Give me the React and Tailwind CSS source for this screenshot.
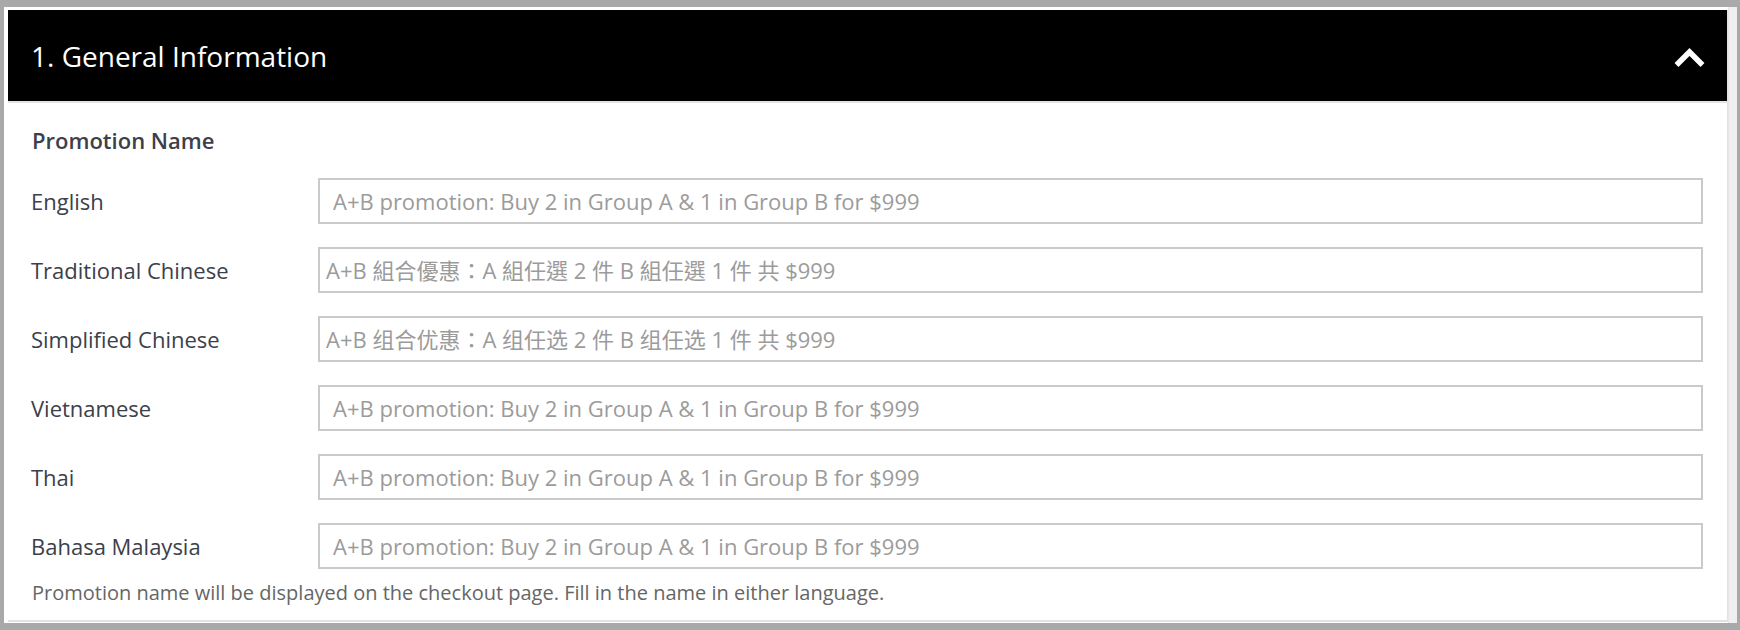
import { useState } from "react"

const font = { fontFamily: '"Open Sans", "Noto Sans CJK TC", sans-serif' }

const rows = [
    { label: "English", placeholder: "A+B promotion: Buy 2 in Group A & 1 in Group B for $999", cjk: false },
    { label: "Traditional Chinese", placeholder: "A+B 組合優惠：A 組任選 2 件 B 組任選 1 件 共 $999", cjk: true },
    { label: "Simplified Chinese", placeholder: "A+B 组合优惠：A 组任选 2 件 B 组任选 1 件 共 $999", cjk: true },
    { label: "Vietnamese", placeholder: "A+B promotion: Buy 2 in Group A & 1 in Group B for $999", cjk: false },
    { label: "Thai", placeholder: "A+B promotion: Buy 2 in Group A & 1 in Group B for $999", cjk: false },
    { label: "Bahasa Malaysia", placeholder: "A+B promotion: Buy 2 in Group A & 1 in Group B for $999", cjk: false },
]

export default function App() {
    const [ open, setOpen ] = useState(true)
    const [ values, setValues ] = useState(rows.map(() => ""))

    return (
        <div className="w-[1740px] h-[630px] bg-[#a9a9a9] pt-[7px] pl-[4px] pr-[3px] pb-[7px] overflow-hidden" style={font}>
            <div className="h-full bg-white flex">
                <div className="flex-1 pl-[4px] pt-[3px] flex flex-col">
                    <div className="flex-1 border-r border-b-2 border-[#e2e2e2] flex flex-col">

                        {/* header */}
                        <button
                            type="button"
                            onClick={() => setOpen(!open)}
                            className="h-[93px] shrink-0 bg-black border-b-2 border-[#e4e4e4] flex items-center justify-between pl-[23px] pr-[22px] text-white text-[28px] cursor-pointer"
                        >
                            <span>1. General Information</span>
                            <svg width="31" height="22" viewBox="0 0 31 22" className={open ? "mt-[5px]" : "mt-[5px] rotate-180"}>
                                <polyline points="2.5,18 15.5,5 28.5,18" fill="none" stroke="white" strokeWidth="5.5" strokeLinejoin="miter" />
                            </svg>
                        </button>

                        {open && (
                            <div className="px-[24px] pt-[22px]">
                                <h3 className="text-[22px] leading-[30px] font-semibold text-[#3c404a]">Promotion Name</h3>

                                <div className="mt-[23px] flex flex-col gap-[23px]">
                                    {rows.map((row, i) => (
                                        <div key={row.label} className="grid grid-cols-[286px_1fr] items-center">
                                            <label className="text-[22px] -ml-[1px] text-[#3c404a]">{row.label}</label>
                                            <input
                                                type="text"
                                                value={values[i]}
                                                onChange={(e) => {
                                                    const next = [...values]
                                                    next[i] = e.target.value
                                                    setValues(next)
                                                }}
                                                placeholder={row.placeholder}
                                                className={(row.cjk ? "pl-[6px]" : "pl-[13px]") + " h-[46px] border-2 border-[#cacaca] text-[22px] text-[#333] placeholder:text-[#9b9b9b] outline-none"}
                                            />
                                        </div>
                                    ))}
                                </div>

                                <p className="mt-[10px] text-[20px] leading-[28px] text-[#666]">
                                    Promotion name will be displayed on the checkout page. Fill in the name in either language.
                                </p>
                            </div>
                        )}
                    </div>
                    <div className="h-[1px] shrink-0"></div>
                </div>
                <div className="w-[9px] bg-[#efefef] border-l border-[#e6e6e6]"></div>
            </div>
        </div>
    )
}
